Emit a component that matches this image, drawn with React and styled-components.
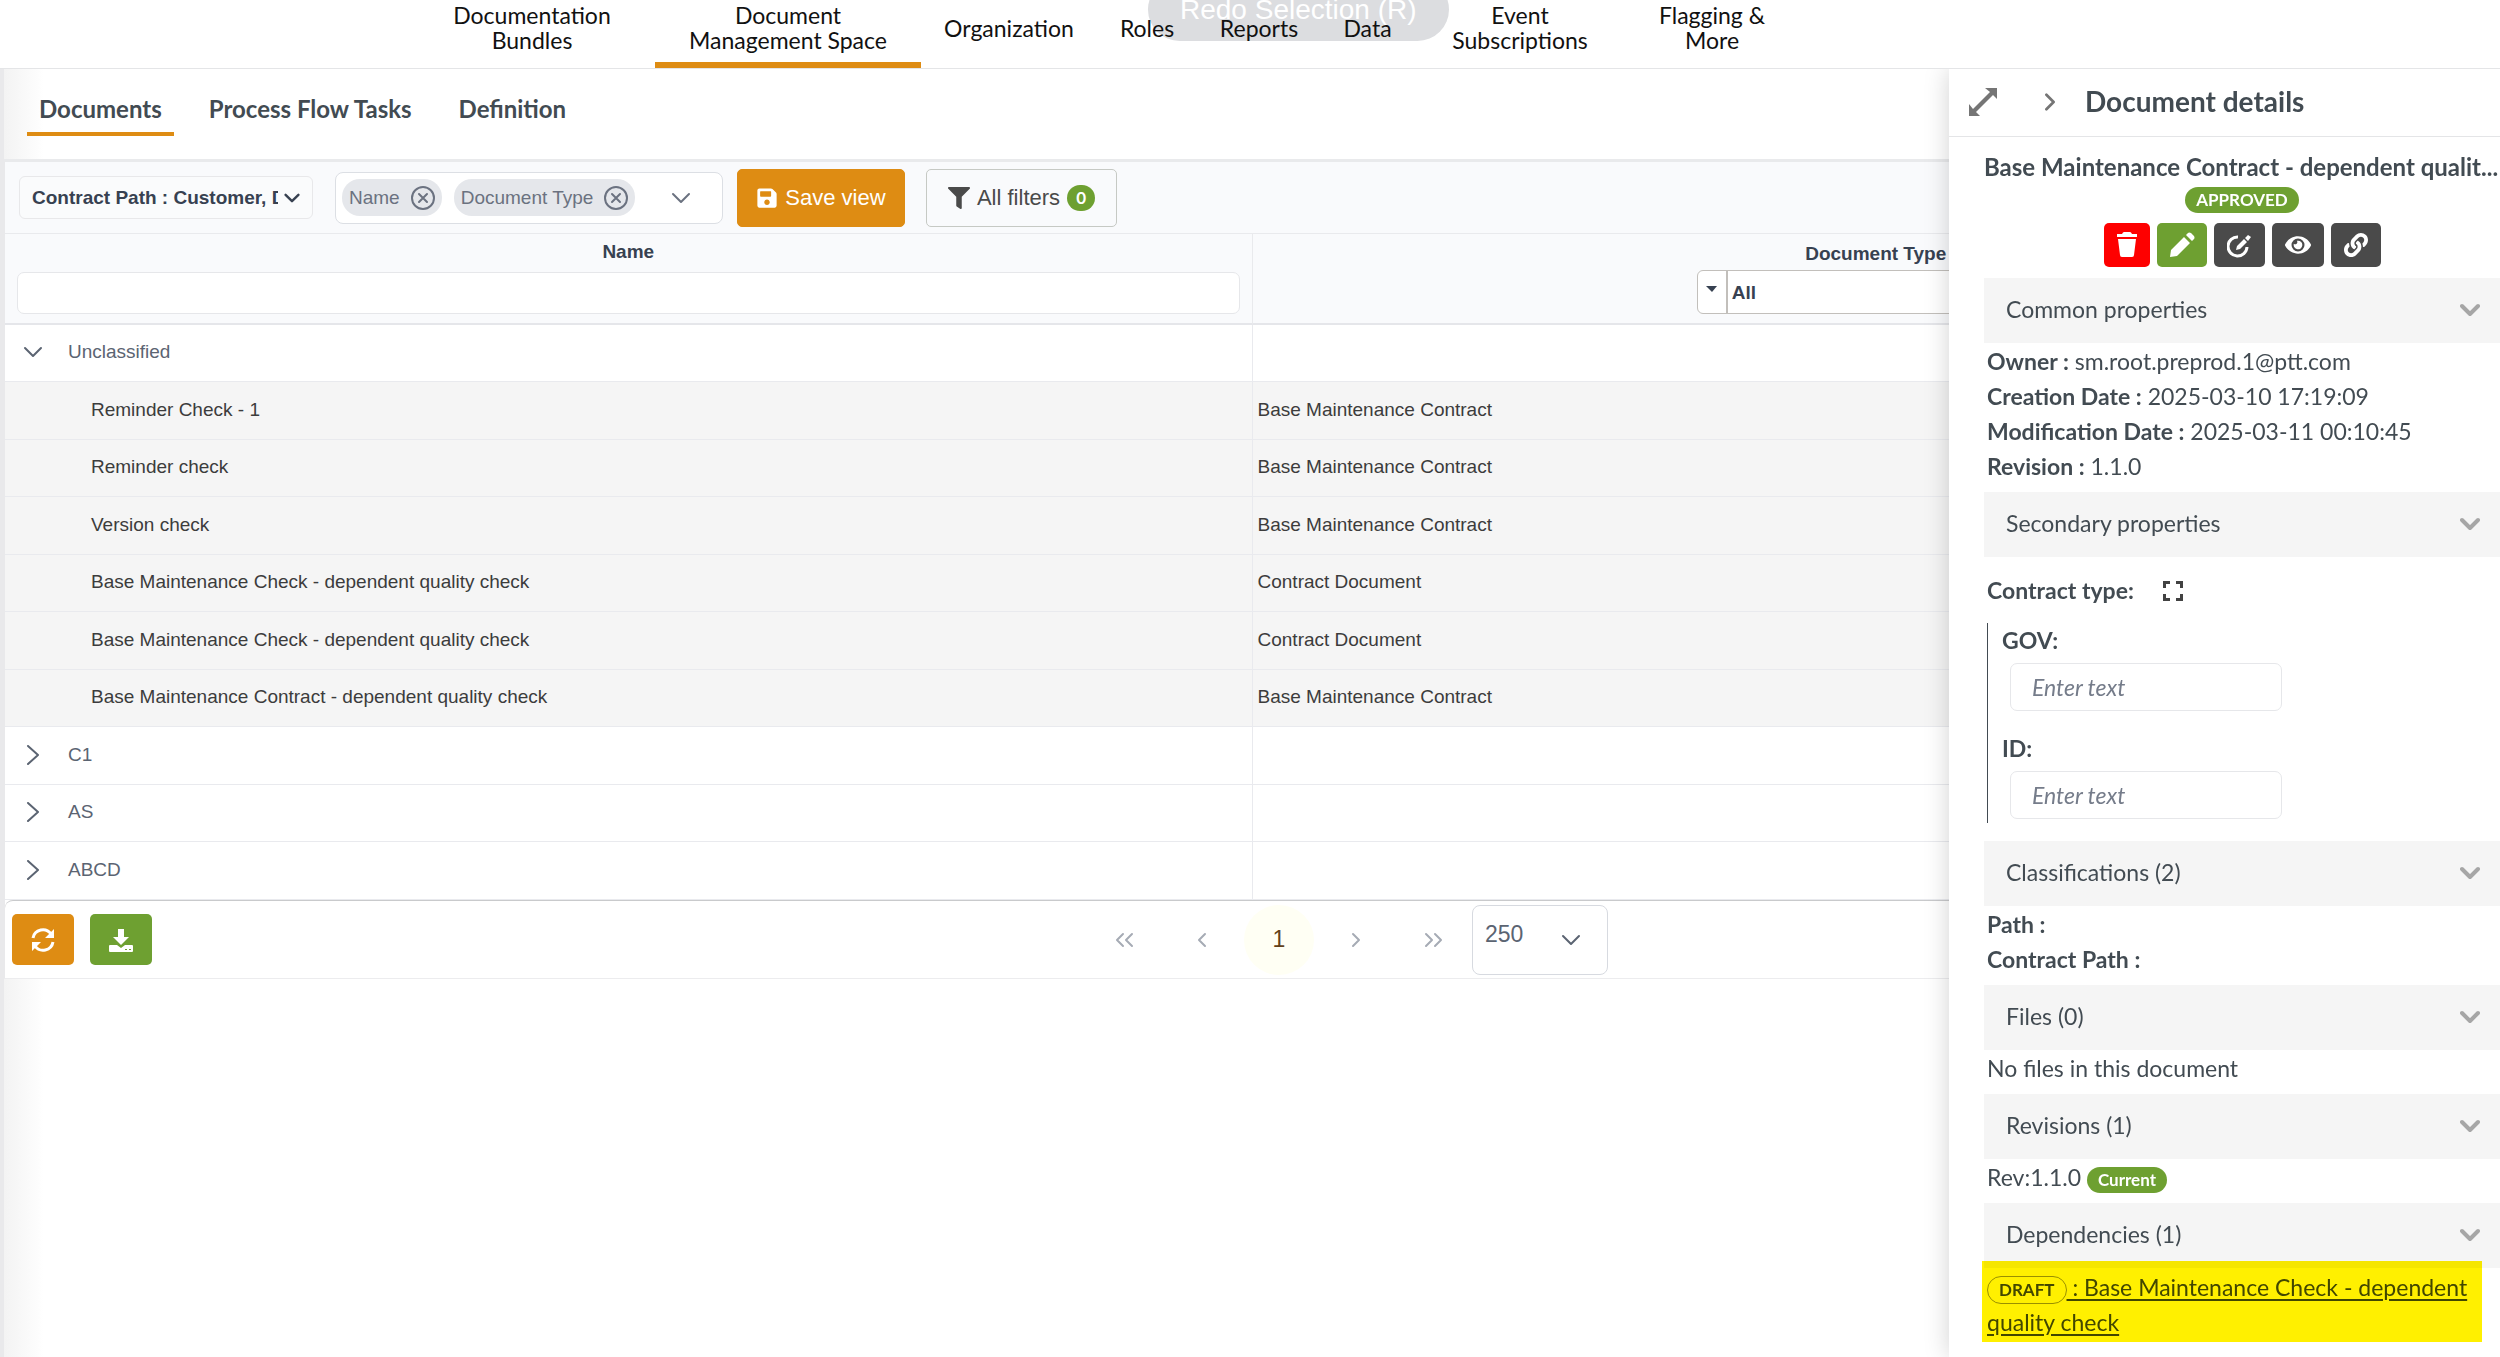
import React from "react";
import styled, { createGlobalStyle } from "styled-components";
import { FaSave, FaFilter, FaEye, FaLink } from "react-icons/fa";

const NAV_ITEMS = [
  { name: 'Documentation Bundles', width: 246, wrap: 170 },
  { name: 'Document Management Space', width: 266, wrap: 222, active: true },
  { name: 'Organization', width: 176 },
  { name: 'Roles', width: 100 },
  { name: 'Reports', width: 124 },
  { name: 'Data', width: 93 },
  { name: 'Event Subscriptions', width: 212, wrap: 168 },
  { name: 'Flagging & More', width: 172, wrap: 128 },
]

const TABS = ['Documents', 'Process Flow Tasks', 'Definition']

const CHIPS = ['Name', 'Document Type']

const ROWS = [
  { name: 'Unclassified', group: true, open: true },
  { name: 'Reminder Check - 1', type: 'Base Maintenance Contract' },
  { name: 'Reminder check', type: 'Base Maintenance Contract' },
  { name: 'Version check', type: 'Base Maintenance Contract' },
  { name: 'Base Maintenance Check - dependent quality check', type: 'Contract Document' },
  { name: 'Base Maintenance Check - dependent quality check', type: 'Contract Document' },
  { name: 'Base Maintenance Contract - dependent quality check', type: 'Base Maintenance Contract' },
  { name: 'C1', group: true },
  { name: 'AS', group: true },
  { name: 'ABCD', group: true },
]

const COMMON = [
  ['Owner', 'sm.root.preprod.1@ptt.com'],
  ['Creation Date', '2025-03-10 17:19:09'],
  ['Modification Date', '2025-03-11 00:10:45'],
  ['Revision', '1.1.0'],
]

const ORANGE = '#de8c13';
const GREEN = '#6ea031';

const GlobalStyle = createGlobalStyle`
  * {
    box-sizing: border-box;
  }
  body {
    margin: 0;
    background: #fff;
    font-family: "Liberation Sans", Arial, sans-serif;
    overflow: hidden;
  }
  button, input, select {
    font: inherit;
    color: inherit;
    margin: 0;
  }
  button {
    cursor: pointer;
  }
`;

const Page = styled.div`
  position: relative;
  display: flex;
  flex-direction: column;
  min-height: 100vh;
`;

const Header = styled.header`
  position: relative;
  height: 69px;
  border-bottom: 1px solid #e4e5e7;
`;

const Hint = styled.div`
  position: absolute;
  left: 1148px;
  top: -22px;
  height: 63px;
  padding: 0 32px;
  border-radius: 32px;
  background: #dcdde0;
  color: #fff;
  font-size: 28px;
  line-height: 63px;
  white-space: nowrap;
`;

const Nav = styled.nav`
  position: relative;
  display: flex;
  height: 68px;
  padding-left: 409px;
`;

const NavLink = styled.a`
  display: flex;
  align-items: center;
  justify-content: center;
  width: ${({ $width }) => $width}px;
  padding-bottom: 6px;
  border-bottom: 6px solid ${({ $active }) => $active ? ORANGE : 'transparent'};
  color: #111;
  font: 23px/25px Lato, sans-serif;
  text-align: center;
  text-decoration: none;
  span {
    max-width: ${({ $wrap }) => $wrap ? $wrap + 'px' : 'none'};
  }
`;

const Main = styled.main`
  flex: 1;
  border-left: 4px solid #e9e9eb;
  background: linear-gradient(to right, #f3f3f3, #fff 40px);
`;

const Tabs = styled.div`
  display: flex;
  gap: 23px;
  height: 90px;
  padding: 18px 0 23px 23px;
`;

const Tab = styled.button`
  padding: 0 12px 2px;
  border: 0;
  border-bottom: 4px solid ${({ $active }) => $active ? ORANGE : 'transparent'};
  background: none;
  color: #424b52;
  font: bold 24px/40px Lato, sans-serif;
`;

const Card = styled.section`
  border-top: 3px solid #e9eaec;
  border-left: 1px solid #e9e9eb;
  border-bottom: 1px solid #ececee;
  background: #fff;
`;

const Toolbar = styled.div`
  display: flex;
  align-items: center;
  height: 72px;
  padding-left: 14px;
  border-bottom: 1px solid #e9eaed;
  background: #f9fafc;
`;

const PathButton = styled.button`
  display: flex;
  align-items: center;
  justify-content: space-between;
  width: 294px;
  height: 43px;
  padding: 0 12px;
  border: 1px solid #e8e8ea;
  border-radius: 6px;
  background: #fafbfc;
  color: #374151;
  font-size: 19px;
  font-weight: bold;
  span {
    width: 246px;
    overflow: hidden;
    text-align: left;
    white-space: nowrap;
  }
`;

const MultiSelect = styled.div`
  display: flex;
  align-items: center;
  gap: 12px;
  width: 388px;
  height: 52px;
  margin: 0 14px 0 22px;
  padding: 0 31px 0 6px;
  border: 1px solid #dcdfe4;
  border-radius: 8px;
  background: #fff;
  color: #6b7280;
`;

const Chip = styled.span`
  display: flex;
  align-items: center;
  gap: 11px;
  height: 37px;
  padding: 0 7px;
  border-radius: 18px;
  background: #e5e7eb;
  font-size: 19px;
  white-space: nowrap;
`;

const IconButton = styled.button`
  display: flex;
  align-items: center;
  padding: 0;
  border: 0;
  background: none;
`;

const Spacer = styled.div`
  flex: 1;
`;

const ToolButton = styled.button`
  display: flex;
  align-items: center;
  justify-content: center;
  gap: 7px;
  width: ${({ $wide }) => $wide ? 191 : 168}px;
  height: 58px;
  margin-right: 21px;
  padding: 0;
  border: 1px solid ${({ $wide }) => $wide ? '#c6c9c4' : ORANGE};
  border-radius: 5px;
  background: ${({ $wide }) => $wide ? '#f9fafc' : ORANGE};
  color: ${({ $wide }) => $wide ? '#4a4a4a' : '#fff'};
  font-size: 22px;
`;

const Count = styled.span`
  width: 28px;
  border-radius: 13px;
  background: ${GREEN};
  color: #fff;
  font: bold 17px/26px Lato, sans-serif;
`;

const Table = styled.table`
  width: 100%;
  border-collapse: separate;
  border-spacing: 0;
  table-layout: fixed;
  font-size: 19px;
`;

const HeadCell = styled.th`
  height: 91px;
  padding: 0 12px;
  border-bottom: 2px solid #e5e6ea;
  border-right: 1px solid #e9eaed;
  background: #f9fafc;
  color: #374151;
  vertical-align: ${({ $low }) => $low ? 'bottom' : 'top'};
  label {
    display: block;
    line-height: ${({ $low }) => $low ? 32 : 36}px;
  }
`;

const FilterInput = styled.input`
  display: block;
  width: 100%;
  height: 42px;
  margin-top: 2px;
  border: 1px solid #e6e7ea;
  border-radius: 7px;
  background: #fff;
`;

const FilterSelect = styled.div`
  display: flex;
  width: 358px;
  height: 44px;
  margin: 0 auto 9px;
  border: 1px solid #c2bfbb;
  border-radius: 6px;
  background: #fff;
  text-align: left;
  svg {
    width: 30px;
    height: 42px;
    border-right: 2px solid #c2bfbb;
  }
  select {
    flex: 1;
    padding: 0 4px;
    border: 0;
    appearance: none;
    background: none;
  }
`;

const Row = styled.tr`
  height: 57px;
  background: ${({ $group }) => $group ? '#fff' : '#f5f5f5'};
  color: ${({ $group }) => $group ? '#5b6472' : '#3c3c3c'};
  &:nth-child(even) {
    height: 58px;
  }
  td {
    padding: 0 5px 2px;
    border-bottom: 1px solid #e9eaee;
    border-right: 1px solid #e9eaee;
  }
`;

const NameCell = styled.div`
  display: flex;
  align-items: center;
  gap: 25px;
  padding-left: ${({ $group }) => $group ? 13 : 81}px;
`;

const Footer = styled.div`
  display: flex;
  align-items: center;
  gap: 16px;
  height: 78px;
  padding-left: 7px;
  border-top: 1px solid #c9cacc;
  border-top-left-radius: 8px;
`;

const FootButton = styled.button`
  display: flex;
  align-items: center;
  justify-content: center;
  width: 62px;
  height: 51px;
  padding: 0;
  border: 0;
  border-radius: 5px;
  background: ${({ $color }) => $color};
  color: #fff;
`;

const Pager = styled.div`
  display: flex;
  flex: 1;
  align-items: center;
  justify-content: center;
  gap: 4px;
  padding-left: 30px;
`;

const Pages = styled.div`
  display: flex;
  gap: 7px;
`;

const PageButton = styled.button`
  display: flex;
  align-items: center;
  justify-content: center;
  width: 70px;
  height: 70px;
  padding: 0;
  border: 0;
  border-radius: 50%;
  background: ${({ $active }) => $active ? '#fffff4' : 'none'};
  color: ${({ $active }) => $active ? '#624118' : '#a6abb5'};
  font-size: 23px;
`;

const PageSize = styled.div`
  position: relative;
  width: 136px;
  height: 70px;
  color: #5b6472;
  select {
    width: 100%;
    height: 100%;
    padding: 0 12px 12px;
    border: 1px solid #d7dae0;
    border-radius: 8px;
    appearance: none;
    background: #fff;
    font-size: 23px;
  }
  svg {
    position: absolute;
    right: 27px;
    top: 25px;
    pointer-events: none;
  }
`;

const Panel = styled.aside`
  position: absolute;
  top: 69px;
  right: 0;
  bottom: 0;
  width: 551px;
  background: #fff;
  box-shadow: 0 0 24px rgba(0, 0, 0, 0.18);
  clip-path: inset(0 0 0 -30px);
  color: #424b52;
  font: 23px/35px Lato, sans-serif;
`;

const PanelHead = styled.div`
  display: flex;
  align-items: center;
  height: 68px;
  padding: 0 0 2px 20px;
  border-bottom: 1px solid #e4e5e7;
  color: #757575;
  h2 {
    margin: 0 0 0 26px;
    color: #424b52;
    font-size: 28px;
  }
  button + button {
    margin-left: 44px;
  }
`;

const PanelBody = styled.div`
  padding-left: 35px;
`;

const Subject = styled.div`
  display: flex;
  flex-direction: column;
  align-items: center;
  height: 141px;
  padding-top: 12px;
  h3 {
    align-self: flex-start;
    margin: 0 0 3px;
    font-size: 24px;
    white-space: nowrap;
  }
`;

const Badge = styled.span`
  display: inline-block;
  padding: 0 11px;
  border-radius: 14px;
  background: ${GREEN};
  color: #fff;
  font-size: 17px;
  font-weight: bold;
  line-height: 26px;
`;

const Actions = styled.div`
  display: flex;
  gap: 7px;
  margin-top: 10px;
`;

const Action = styled.button`
  display: flex;
  align-items: center;
  justify-content: center;
  width: ${({ $width }) => $width}px;
  height: 44px;
  padding: 0;
  border: 0;
  border-radius: 5px;
  background: ${({ $color }) => $color || '#4a4a4a'};
  color: #fff;
`;

const SectionBar = styled.button`
  display: flex;
  align-items: center;
  justify-content: space-between;
  width: 100%;
  height: 65px;
  padding: 0 20px 2px 22px;
  border: 0;
  background: #f5f5f5;
  svg {
    color: #a6a6a6;
  }
`;

const Lines = styled.div`
  padding: 1px 0 8px 3px;
`;

const LineItem = styled.div`
  height: 35px;
`;

const ContractType = styled.div`
  display: flex;
  align-items: center;
  gap: 29px;
  padding: 16px 0 15px 3px;
`;

const Fields = styled.div`
  margin: 0 0 18px 3px;
  padding: 0 0 4px 14px;
  border-left: 1px solid #424b52;
  label {
    display: block;
    padding-bottom: 6px;
    font-weight: bold;
    line-height: 34px;
  }
  input {
    display: block;
    width: 272px;
    height: 48px;
    margin-left: 8px;
    padding: 0 21px;
    border: 1px solid #e6e7ea;
    border-radius: 7px;
  }
  input + label {
    margin-top: 20px;
  }
  input::placeholder {
    color: #757c8a;
    font-style: italic;
    opacity: 1;
  }
`;

const Dependency = styled.div`
  position: relative;
  padding: 2px 12px 0 3px;
  a {
    color: #424b52;
    text-underline-offset: 3px;
  }
`;

const Draft = styled(Badge)`
  border: 1px solid #999;
  background: none;
  color: #424b52;
`;

const Highlight = styled.div`
  position: absolute;
  top: -7px;
  left: -2px;
  right: 18px;
  bottom: -2px;
  background: #fff000;
  mix-blend-mode: multiply;
  pointer-events: none;
`;

const Chevron = ({ d = 'M2 6 L10 14 L18 6', size = 20, width = 2 }) => (
  <svg width={size} height={size} viewBox="0 0 20 20" fill="none" stroke="currentColor" strokeWidth={width} strokeLinecap="round" strokeLinejoin="round">
    <path d={d} />
  </svg>
)

const RIGHT = 'M5 1 L15 10 L5 19';

const CloseIcon = () => (
  <svg width="24" height="24" viewBox="0 0 24 24" fill="none" stroke="currentColor" strokeWidth="2">
    <circle cx="12" cy="12" r="11" />
    <path d="M8 8 L16 16 M16 8 L8 16" strokeLinecap="round" />
  </svg>
)

const Section = ({ title, children }) => (
  <>
    <SectionBar type="button">
      {title}
      <Chevron width={4} />
    </SectionBar>
    {children}
  </>
)

const DetailsPanel = () => (
  <Panel>
    <PanelHead>
      <IconButton aria-label="Expand">
        <svg width="28" height="28" viewBox="0 0 28 28" fill="currentColor">
          <path d="M16 0 H28 V11 L24 7 L7 24 L11 28 H0 V16 L4 21 L21 4 Z" />
        </svg>
      </IconButton>
      <IconButton aria-label="Collapse">
        <Chevron d="M6 2 L14 10 L6 18" size={18} width={3} />
      </IconButton>
      <h2>Document details</h2>
    </PanelHead>
    <PanelBody>
      <Subject>
        <h3>Base Maintenance Contract - dependent qualit...</h3>
        <Badge>APPROVED</Badge>
        <Actions>
          <Action $width={46} $color="#fe0000" aria-label="Delete">
            <svg width="22" height="26" viewBox="0 0 22 26" fill="currentColor">
              <path d="M1 2 H6 Q7 0 8 0 H14 Q15 0 16 2 H21 V5 H1 Z M2 7 H20 L18 23 Q18 25 16 25 H6 Q4 25 4 23 Z" />
            </svg>
          </Action>
          <Action $width={50} $color={GREEN} aria-label="Edit">
            <svg width="26" height="26" viewBox="0 0 26 26" fill="currentColor">
              <path d="M1 25 L2 18 L15 5 L21 11 L8 24 Z M17 3 L19 1 Q20 0 22 1 L25 4 Q26 6 25 7 L23 9 Z" />
            </svg>
          </Action>
          <Action $width={51} aria-label="Redraft">
            <svg width="24" height="26" viewBox="0 0 24 26" fill="none" stroke="currentColor" strokeWidth="3">
              <path d="M11 5 A9.500 9.500 0 1 0 20 15" />
              <path d="M9 18 L10 14 L17 7 L20 10 L13 17 Z M18 6 L21 3 L24 5 L21 9 Z" fill="currentColor" stroke="none" />
            </svg>
          </Action>
          <Action $width={52} aria-label="View"><FaEye size={26} /></Action>
          <Action $width={50} aria-label="Copy link"><FaLink size={24} /></Action>
        </Actions>
      </Subject>
      <Section title="Common properties">
        <Lines>
          {COMMON.map(([label, value]) => (
            <LineItem key={label}><b>{label} :</b> {value}</LineItem>
          ))}
        </Lines>
      </Section>
      <Section title="Secondary properties">
        <ContractType>
          <b>Contract type:</b>
          <IconButton aria-label="Fullscreen">
            <svg width="20" height="20" viewBox="0 0 20 20" fill="none" stroke="#424242" strokeWidth="3">
              <path d="M1.500 7 V1.500 H7 M13 1.500 H18.500 V7 M18.500 13 V18.500 H13 M7 18.500 H1.500 V13" />
            </svg>
          </IconButton>
        </ContractType>
        <Fields>
          <label htmlFor="gov">GOV:</label>
          <input id="gov" placeholder="Enter text" />
          <label htmlFor="doc-id">ID:</label>
          <input id="doc-id" placeholder="Enter text" />
        </Fields>
      </Section>
      <Section title="Classifications (2)">
        <Lines>
          <LineItem><b>Path :</b></LineItem>
          <LineItem><b>Contract Path :</b></LineItem>
        </Lines>
      </Section>
      <Section title="Files (0)">
        <Lines>
          <LineItem>No files in this document</LineItem>
        </Lines>
      </Section>
      <Section title="Revisions (1)">
        <Lines>
          <LineItem>Rev:1.1.0 <Badge>Current</Badge></LineItem>
        </Lines>
      </Section>
      <Section title="Dependencies (1)">
        <Dependency>
          <Draft>DRAFT</Draft><a href="#dependency"> : Base Maintenance Check - dependent quality check</a>
          <Highlight />
        </Dependency>
      </Section>
    </PanelBody>
  </Panel>
)

const App = () => {
  return (
    <Page>
      <GlobalStyle />
      <Header>
        <Hint>Redo Selection (R)</Hint>
        <Nav>
          {NAV_ITEMS.map(({ name, width, wrap, active }) => (
            <NavLink href="#" key={name} $width={width} $wrap={wrap} $active={active}>
              <span>{name}</span>
            </NavLink>
          ))}
        </Nav>
      </Header>
      <Main>
        <Tabs>
          {TABS.map((name, index) => (
            <Tab key={name} $active={index === 0}>{name}</Tab>
          ))}
        </Tabs>
        <Card>
          <Toolbar>
            <PathButton>
              <span>Contract Path : Customer, D</span>
              <Chevron size={16} width={3} />
            </PathButton>
            <MultiSelect>
              {CHIPS.map((name) => (
                <Chip key={name}>
                  {name}
                  <IconButton aria-label={'Remove ' + name}><CloseIcon /></IconButton>
                </Chip>
              ))}
              <Spacer />
              <IconButton aria-label="Choose columns"><Chevron /></IconButton>
            </MultiSelect>
            <ToolButton><FaSave size={22} />Save view</ToolButton>
            <ToolButton $wide><FaFilter size={22} />All filters<Count>0</Count></ToolButton>
          </Toolbar>
          <Table>
            <colgroup>
              <col width="50%" />
              <col width="50%" />
            </colgroup>
            <thead>
              <tr>
                <HeadCell>
                  <label htmlFor="name-filter">Name</label>
                  <FilterInput id="name-filter" />
                </HeadCell>
                <HeadCell $low>
                  <label htmlFor="type-filter">Document Type</label>
                  <FilterSelect>
                    <svg viewBox="0 0 28 42" fill="#374151"><path d="M8 15 H19 L14 21 Z" /></svg>
                    <select id="type-filter"><option>All</option></select>
                  </FilterSelect>
                </HeadCell>
              </tr>
            </thead>
            <tbody>
              {ROWS.map(({ name, type, group, open }, index) => (
                <Row key={index} $group={group}>
                  <td>
                    <NameCell $group={group}>
                      {group && (
                        <IconButton aria-label={'Toggle ' + name}>
                          <Chevron d={open ? undefined : RIGHT} />
                        </IconButton>
                      )}
                      {name}
                    </NameCell>
                  </td>
                  <td>{type}</td>
                </Row>
              ))}
            </tbody>
          </Table>
          <Footer>
            <FootButton $color={ORANGE} aria-label="Refresh">
              <svg width="24" height="24" viewBox="0 0 24 24" fill="none" stroke="currentColor" strokeWidth="3">
                <path d="M2 10 A10 10 0 0 1 20 6 M22 14 A10 10 0 0 1 4 18" />
                <path d="M23 1 V10 H14 Z M1 23 V14 H10 Z" fill="currentColor" stroke="none" />
              </svg>
            </FootButton>
            <FootButton $color={GREEN} aria-label="Download">
              <svg width="24" height="24" viewBox="0 0 24 24" fill="currentColor">
                <path d="M9 1 H15 V9 H20 L12 17 L4 9 H9 Z M1 17 H8 L12 20 L16 17 H23 Q24 17 24 18 V23 Q24 24 23 24 H1 Q0 24 0 23 V18 Q0 17 1 17 Z" />
                <path d="M16 21 H18 V22 H16 Z M20 21 H22 V22 H20 Z" fill={GREEN} />
              </svg>
            </FootButton>
            <Pager>
              <Pages>
                <PageButton aria-label="First page"><Chevron d="M8 4 L2 10 L8 16 M17 4 L11 10 L17 16" /></PageButton>
                <PageButton aria-label="Previous page"><Chevron d="M13 4 L7 10 L13 16" /></PageButton>
                <PageButton $active>1</PageButton>
                <PageButton aria-label="Next page"><Chevron d="M7 4 L13 10 L7 16" /></PageButton>
                <PageButton aria-label="Last page"><Chevron d="M3 4 L9 10 L3 16 M12 4 L18 10 L12 16" /></PageButton>
              </Pages>
              <PageSize>
                <select aria-label="Rows per page"><option>250</option></select>
                <Chevron />
              </PageSize>
            </Pager>
          </Footer>
        </Card>
      </Main>
      <DetailsPanel />
    </Page>
  )
}

export default App;
